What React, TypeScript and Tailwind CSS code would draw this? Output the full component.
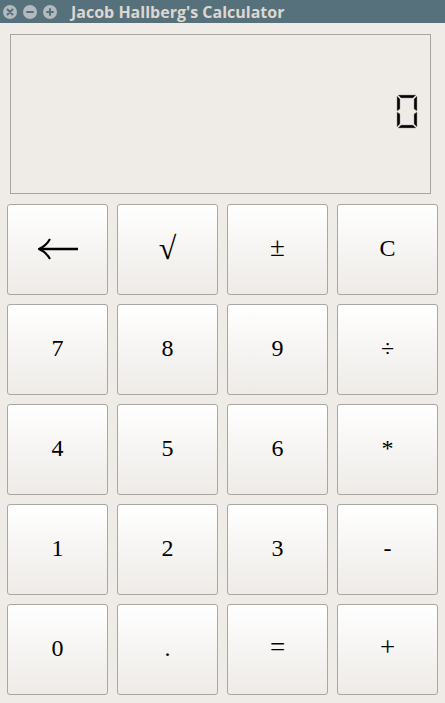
const keys = [
  ["←", "√", "±", "C"],
  ["7", "8", "9", "÷"],
  ["4", "5", "6", "*"],
  ["1", "2", "3", "-"],
  ["0", ".", "=", "+"],
];

function WinButton({ kind }: { kind: "close" | "min" | "max" }) {
  return (
    <svg width="14" height="14" viewBox="0 0 14 14">
      <circle cx="7" cy="7" r="7" fill="#b3babd" />
      {kind === "close" && (
        <path d="M4.5 4.5 L9.5 9.5 M9.5 4.5 L4.5 9.5" stroke="#56707c" strokeWidth="2" strokeLinecap="round" />
      )}
      {kind === "min" && <path d="M4 7 H10" stroke="#56707c" strokeWidth="2" strokeLinecap="round" />}
      {kind === "max" && (
        <path d="M4 7 H10 M7 4 V10" stroke="#56707c" strokeWidth="2" strokeLinecap="round" />
      )}
    </svg>
  );
}

// seven-segment "0": all segments lit except the middle one
function LcdZero() {
  const seg = "black";
  return (
    <svg width="22" height="35" viewBox="0 0 22 35">
      <polygon points="2,1 20,1 17,4 5,4" fill={seg} stroke="#999" strokeWidth="0.5" />
      <polygon points="1,2 4,5 4,15 1,17" fill={seg} stroke="#999" strokeWidth="0.5" />
      <polygon points="21,2 18,5 18,15 21,17" fill={seg} stroke="#999" strokeWidth="0.5" />
      <polygon points="1,18 4,20 4,30 1,33" fill={seg} stroke="#999" strokeWidth="0.5" />
      <polygon points="21,18 18,20 18,30 21,33" fill={seg} stroke="#999" strokeWidth="0.5" />
      <polygon points="5,31 17,31 20,34 2,34" fill={seg} stroke="#999" strokeWidth="0.5" />
    </svg>
  );
}

function BackArrow() {
  return (
    <svg width="40" height="22" viewBox="0 0 40 22" className="mt-[2px]">
      <path d="M2 11 H40" stroke="black" strokeWidth="2.6" />
      <path d="M12 1 Q8 8 1 11 Q8 14 12 21" fill="none" stroke="black" strokeWidth="2.2" />
    </svg>
  );
}

function keySize(k: string) {
  if (k === "√") return "text-[32px]";
  if (k === "±" || k === "=" || k === "+") return "text-[27px]";
  return "text-[24px]";
}

export default function App() {
  return (
    <div className="w-[445px] h-[703px] bg-[#efebe7] flex flex-col overflow-hidden">
      <div className="h-[23px] bg-[#56707c] flex items-center pl-[3px] gap-[6px]">
        <WinButton kind="close" />
        <WinButton kind="min" />
        <WinButton kind="max" />
        <span
          className="ml-[8px] text-[16px] font-bold text-[#dcd8d0] leading-none"
          style={{ fontFamily: '"Open Sans", sans-serif' }}
        >
          Jacob Hallberg's Calculator
        </span>
      </div>

      <div className="mt-[11px] ml-[10px] w-[421px] h-[160px] border border-[#a8a49f] flex items-center justify-end pr-[12px] pb-[6px]">
        <LcdZero />
      </div>

      <div
        className="mt-[10px] ml-[7px] grid grid-cols-[101px_101px_101px_101px] gap-x-[9px] gap-y-[9px]"
        style={{ fontFamily: '"Liberation Serif", "DejaVu Serif", serif' }}
      >
        {keys.flat().map((k) => (
          <button
            key={k}
            aria-label={k === "←" ? "backspace" : undefined}
            className={`h-[91px] rounded-[3px] border border-[#aaa6a1] bg-gradient-to-b from-white to-[#eeebe7] flex items-center justify-center text-black pb-[4px] ${keySize(k)}`}
          >
            {k === "←" ? <BackArrow /> : k}
          </button>
        ))}
      </div>
    </div>
  );
}
